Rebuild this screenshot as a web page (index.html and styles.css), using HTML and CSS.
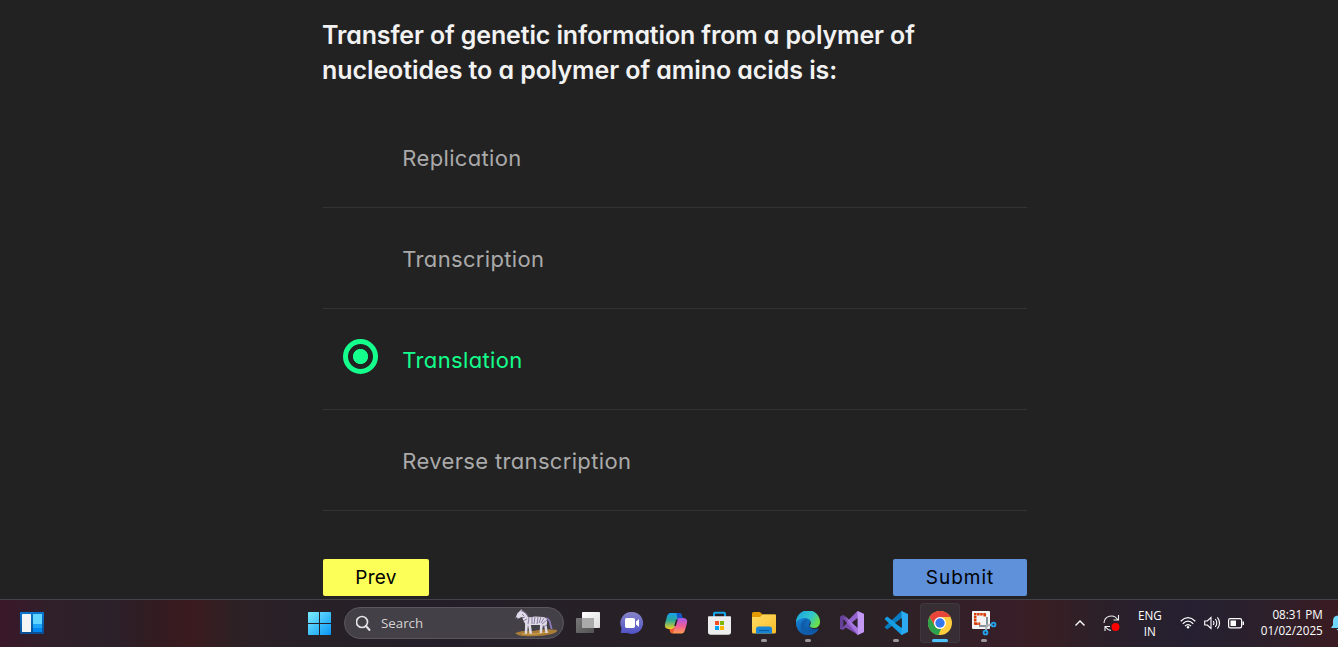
FILE: index.html
```html
<!DOCTYPE html>
<html lang="en">
<head>
<meta charset="utf-8">
<title>Quiz</title>
<link rel="stylesheet" href="styles.css">
</head>
<body>
<main class="quiz">
  <h1 class="question"><span class="q-first">Transfer of genetic information from a polymer of</span><br><span class="q-second">nucleotides to a polymer of amino acids is:</span></h1>
  <ul class="options">
    <li class="option"><span class="marker"></span><span class="label">Replication</span></li>
    <li class="option"><span class="marker"></span><span class="label">Transcription</span></li>
    <li class="option selected"><span class="marker"></span><span class="label">Translation</span></li>
    <li class="option"><span class="marker"></span><span class="label">Reverse transcription</span></li>
  </ul>
  <div class="actions">
    <button class="btn prev">Prev</button>
    <button class="btn submit">Submit</button>
  </div>
</main>
<footer class="taskbar">
  <div class="widgets">
    <svg width="24" height="22" viewBox="0 0 24 22"><defs><linearGradient id="wd" x2="0" y2="1"><stop stop-color="#0878d4"/><stop offset="1" stop-color="#0b4d91"/></linearGradient></defs><rect width="24" height="22" rx=".6" fill="url(#wd)"/><rect x="2" y="2" width="9" height="18" rx=".6" fill="#f4f4f4"/><rect x="13" y="2" width="9" height="10" fill="#60d5ff"/><rect x="13" y="12" width="9" height="4" fill="#1ca4fa"/><rect x="13" y="16" width="9" height="4" fill="#0086f0"/></svg>
  </div>
  <div class="apps">
    <div class="slot start"><svg width="24" height="24" viewBox="0 0 24 24"><defs><linearGradient id="wn" x2="1" y2="1"><stop stop-color="#7cecff"/><stop offset="1" stop-color="#0796f5"/></linearGradient></defs><path fill="url(#wn)" d="M0 1.800q0-.8.8-.8H11v11H0zM12 1h10.200q.8 0 .8.8V12H12zM0 13h11v11H.8q-.8 0-.8-.8zM12 13h11v10.200q0 .8-.8.8H12z"/></svg></div>
    <div class="search">
      <svg width="17" height="17" viewBox="0 0 17 17" fill="none" stroke="#e4e2e4" stroke-width="1.700"><circle cx="6" cy="7" r="5.500"/><path d="M10 11l3.500 4" stroke-width="2" stroke-linecap="round"/></svg>
      <span class="search-text">Search</span>
      <svg class="zebra" width="44" height="28" viewBox="0 0 44 28"><path d="M1 24q8-3 18-2 12-3 24-1 1 2-5 4-12 3-28 2-6 0-9-3z" fill="#a97c38"/><path d="M8 25q14 1 27-2" stroke="#d2a852" fill="none"/><path d="M1.500 9l1.800-4.500 2.700-2.700 1.200-1.500 2 2.300q3 1.800 5 6l7-1 8 .3q4 .5 4 4l-.5 4 1 8h-2.300l-1-6-1.500-2-1 8h-2.200l.3-8-9 .2 1 8.700h-2.500l-1.500-9-1 9h-2.200l.3-10q-2.600-4-2.800-7l-2.300 1-3 1.500z" fill="#dfdae8"/><path d="M32 9q4 1 4.500 7l1.200 4" stroke="#8c7bbb" stroke-width="1.800" fill="none"/><path d="M6.500 1.500q6 1 8 6M8 5l2 2M8 9l3-1M9 12l4-2M15 9l-1 6M18 8v7M21 8l-1 7M24 8l-1 7M27 8l-2 6M30 9l-3 5M33 11l-5 4M29 18l4-2" stroke="#7d729a" stroke-width=".9" fill="none"/><path d="M1.500 9l1.500-1 1 2-2 .6z" fill="#49405a"/></svg>
    </div>
    <div class="slot"><svg width="24" height="24" viewBox="0 0 24 24"><defs><linearGradient id="tv" x2="1" y2="1"><stop stop-color="#fff"/><stop offset="1" stop-color="#dcdcdc"/></linearGradient><linearGradient id="tk" x2="1" y2="1"><stop stop-color="#777"/><stop offset="1" stop-color="#535353"/></linearGradient></defs><rect x="0" y="7" width="18" height="15" rx=".8" fill="url(#tk)"/><rect x="6" y="1" width="18" height="16" rx=".8" fill="url(#tv)"/><path d="M6 7h12v10H6z" fill="#aaa"/></svg></div>
    <div class="slot"><svg width="24" height="24" viewBox="0 0 24 24"><defs><linearGradient id="ch" x2="0" y2="1"><stop stop-color="#8784c7"/><stop offset="1" stop-color="#5052c8"/></linearGradient></defs><path d="M12 1a11 11 0 1 1-4.500 21H.8l.8-5A11 11 0 0 1 12 1z" fill="url(#ch)"/><rect x="5" y="7" width="10" height="10" rx="1.700" fill="#fff"/><path d="M16 10.500L19 8v8l-3-2.500z" fill="#fff"/></svg></div>
    <div class="slot"><svg width="24" height="24" viewBox="0 0 24 24"><defs><linearGradient id="ca" x2="0" y2="1"><stop stop-color="#1aa1ee"/><stop offset=".45" stop-color="#28a99b"/><stop offset="1" stop-color="#f2cf1e"/></linearGradient><linearGradient id="cb" x2="0" y2="1"><stop stop-color="#a05be9"/><stop offset=".5" stop-color="#ef5c9c"/><stop offset="1" stop-color="#ff9c4b"/></linearGradient></defs><path d="M6.500 2H15q2 0 2.700 2l.8 3h-2.500q-2 0-2.600 2l-2.200 6.500Q10.400 18 8 18H4.500Q0 17.500 1 13l2-7.500Q4 2 6.500 2z" fill="url(#ca)"/><path d="M12.500 2H15q2 0 2.700 2l.8 3h-2.500q-2 0-2.600 2z" fill="#1756c8"/><path d="M17.500 22.500H9q-2 0-2.700-2L5.500 18H8q2 0 2.600-2l2.200-7q.7-2 2.900-2h4q4.300.5 3.300 5l-2 7q-1 3.500-3.500 3.500z" fill="url(#cb)"/><path d="M5.500 18H8q2 0 2.600-2l-1.200 5q-.4 1.500-1.700 1.300-1.200-.3-1.700-1.800z" fill="#f25d31"/><path d="M13 8.500l-2 6.500" stroke="#2a2229" stroke-width="1.600"/></svg></div>
    <div class="slot"><svg width="24" height="24" viewBox="0 0 24 24"><path d="M6 6V2.800q0-1 1-1h9q1 0 1 1V6" fill="none" stroke="#16a8ed" stroke-width="2"/><path d="M0 6q0-.8.8-.8h21.400q.8 0 .8.8v15q0 2.700-2.700 2.700H2.700Q0 23.700 0 21z" fill="#eee"/><path d="M7 10h4v4H7z" fill="#f14f21"/><path d="M12 10h4v4h-4z" fill="#7eb900"/><path d="M7 15h4v4H7z" fill="#00a3ee"/><path d="M12 15h4v4h-4z" fill="#feb800"/></svg></div>
    <div class="slot running"><svg width="24" height="24" viewBox="0 0 24 24"><defs><linearGradient id="fo" x2="1" y2="1"><stop stop-color="#ffdc66"/><stop offset="1" stop-color="#f9bd29"/></linearGradient></defs><path d="M0 2.500Q0 1 1.500 1H8l2.500 2.500H23q1 0 1 1V10H0z" fill="#e29b00"/><path d="M0 6h8l2.500-2.500H23q1 0 1 1V21q0 1.500-1.500 1.500h-21Q0 22.500 0 21z" fill="url(#fo)"/><path d="M4 22.500V18q0-2.500 2.500-2.500h11q2.500 0 2.500 2.500v4.500z" fill="#1685d5"/><path d="M7 19.500h10" stroke="#0b5b9f" stroke-width="1.200"/></svg></div>
    <div class="slot running"><svg width="24" height="24" viewBox="0 0 24 24"><defs><linearGradient id="ea" x2="1" y2=".5"><stop stop-color="#199fe5"/><stop offset=".65" stop-color="#32c6c9"/><stop offset="1" stop-color="#68df4d"/></linearGradient><linearGradient id="eb" x2="1" y2="1"><stop stop-color="#1787dc"/><stop offset="1" stop-color="#083f8d"/></linearGradient></defs><path d="M0 12Q1 5 9 6q6 1 5 6-2 3 1 5 3 1.500 7 .5.8 0 .5.800A12 12 0 0 1 0 12z" fill="url(#eb)"/><path d="M0 11.500A12 12 0 0 1 24 11c0 4-3 6-6 6-3.500 0-5-1.600-4-3 2-2.200 0-7-5-7Q3 7 0 11.500z" fill="url(#ea)"/><path d="M12 9.500Q8.500 11 8.500 14q0 5 5.500 6 4 .8 8.500-2-4 6-10.500 6Q8 24 5 18q-1.500-6 4-9.500 2-.5 3 1z" fill="#115ca8"/></svg></div>
    <div class="slot"><svg width="24" height="24" viewBox="0 0 24 24"><path d="M0 6l3-2 3 3 12 16-3-1L5.500 16.500 3 19l-3-1.500z" fill="#7b4db0"/><path d="M0 17.500L17.500 0 24 3v18l-6.500 3L3.500 8v8L0 18z" fill="#9563cd"/><path d="M17.500 0L24 3v18l-6.500 3z" fill="#c398f5"/><path d="M17.500 7v10l-6-5z" fill="#2c2229"/><path d="M0 6l3.500-2v14L0 17z" fill="#65409b"/><path d="M3.300 8v8L7 12z" fill="#2c2229"/><path d="M4 4l13.500 19.500V17L5 5z" fill="#a676df"/></svg></div>
    <div class="slot running"><svg width="24" height="24" viewBox="0 0 24 24"><path d="M.5 16L17.500 0 19 .6v6.200L3 18.500z" fill="#087cc1"/><path d="M.5 8L3 5.600l16 11.700V23l-1.500 1z" fill="#159ce2"/><path d="M17.500 0L24 3v18l-6.500 3q-1 0 0-1.500V2q0-1 0-2z" fill="#2baaf1"/><path d="M17.800 7v10L11 12z" fill="#292329"/></svg></div>
    <div class="slot running active"><svg width="24" height="24" viewBox="0 0 24 24"><circle cx="12" cy="12" r="12" fill="#ffcd3d"/><path d="M1.600 6A12 12 0 0 1 22.400 6H12l-5.200 9z" fill="#e9453b"/><path d="M1.600 6l5.200 9q2 3.500 6.200 3L10.500 24A12 12 0 0 1 1.600 6z" fill="#2ca24d"/><circle cx="12" cy="12" r="6" fill="#fff"/><circle cx="12" cy="12" r="4.700" fill="#3478ed"/></svg></div>
    <div class="slot running"><svg width="24" height="24" viewBox="0 0 24 24" overflow="visible"><rect width="18" height="18" rx="1" fill="#f2f3f4"/><path d="M2 3.200h12M3.200 5v9M3.200 12.800h5M12.800 3v3" fill="none" stroke="#d73b06" stroke-width="2.500" stroke-dasharray="2.500 .6"/><path d="M7 15h8V6" fill="none" stroke="#889098" stroke-width="2"/><path d="M14 14.500l5-.5M14.500 15l-.5 4" stroke="#abb1b6" stroke-width="2"/><circle cx="21.500" cy="13.500" r="1.900" fill="none" stroke="#23a4ed" stroke-width="1.900"/><circle cx="13.500" cy="21.500" r="1.900" fill="none" stroke="#23a4ed" stroke-width="1.900"/></svg></div>
  </div>
  <div class="tray">
    <svg class="chevron" width="12" height="8" viewBox="0 0 12 8"><path d="M1.500 6.500L6 2l4.500 4.500" fill="none" stroke="#fff" stroke-width="1.400"/></svg>
    <svg class="sync" width="18" height="18" viewBox="0 0 18 18" fill="none" stroke="#eee" stroke-width="1.100"><path d="M1 9a7.300 7.300 0 0 1 13.500-3.500M15.500 1v5h-5M8 16.500q-3.500-.5-5.500-3.500M2 17v-4.500h5"/><circle cx="12.500" cy="13" r="4" fill="#f00" stroke="none"/></svg>
    <div class="lang">ENG<br>IN</div>
    <svg class="wifi" width="16" height="14" viewBox="0 0 16 14" fill="none" stroke="#fff" stroke-width="1.200"><path d="M.7 5.200q7.300-7 14.600 0M2.800 7.700q5.200-5 10.400 0M5 10.200q3-3 6 0"/><circle cx="8" cy="11.300" r="1.200" fill="#fff" stroke="none"/></svg>
    <svg class="volume" width="17" height="14" viewBox="0 0 17 14" fill="none" stroke="#fff" stroke-width="1.100"><path d="M.7 5h2.600L7 1.500v11L3.300 9H.7zM9.200 5q1.500 2 0 4M11.300 3q3 4 0 8M13.400 1.300q4.300 5.700 0 11.400"/></svg>
    <svg class="battery" width="17" height="11" viewBox="0 0 17 11"><rect x=".6" y=".6" width="13" height="9.200" rx="1.600" fill="none" stroke="#fff" stroke-width="1.200"/><path d="M2.500 2.500H8v5.500H2.500zM14.500 3.500H16v3.500h-1.500z" fill="#fff"/></svg>
    <div class="clock">08:31 PM<br>01/02/2025</div>
    <svg class="bell" width="16" height="17" viewBox="0 0 16 17"><path d="M0 13l2-3V6q0-5.500 6-5.500T14 6v4l2 3zM5.500 14h5q-2.500 3.500-5 0z" fill="#70d9fb"/></svg>
  </div>
</footer>
</body>
</html>
```
FILE: styles.css
```css
* { box-sizing: border-box; }
body { margin: 0; width: 1338px; height: 647px; overflow: hidden; display: flex; flex-direction: column; background: #222; font-family: Inter, "Noto Sans", sans-serif; font-feature-settings: "cv11"; }
.quiz { width: 704px; height: 599px; margin-left: 323px; flex: none; }
.question { margin: 0 0 0 -1px; padding-top: 18px; height: 107px; font-size: 25px; line-height: 35px; font-weight: 600; color: #f2f2f2; white-space: nowrap; }
.q-first { letter-spacing: -.14px; }
.q-second { letter-spacing: -.08px; }
.options { margin: 0; padding: 0; list-style: none; }
.option { display: flex; height: 101px; padding-left: 20px; border-bottom: 1px solid #333; align-items: center; font-size: 22px; color: #aaa; }
.marker { width: 35px; height: 35px; margin: -6px 25px 0 0; flex: none; border-radius: 50%; }
.label { padding-top: 1px; margin-left: -.7px; letter-spacing: .34px; }
.selected { color: #14ff8c; }
.selected .marker { border: 5px solid #14ff8c; background: radial-gradient(circle, #14ff8c 7.200px, transparent 7.900px); }
.actions { display: flex; justify-content: space-between; padding-top: 48px; }
.btn { height: 37px; padding: 0; border: 0; border-radius: 2px; font: 400 19px/37px Inter, sans-serif; font-feature-settings: "cv11"; color: #000; }
.prev { width: 106px; background: #fbff57; letter-spacing: .3px; }
.submit { width: 134px; background: #5f90da; letter-spacing: 1px; }
.taskbar { height: 48px; flex: none; border-top: 1px solid #48434a; display: flex; background: linear-gradient(90deg, #3a1729 0, #30202a 50px, #2b2029 110px, #341b20 165px, #3b1a1e 190px, #2d2024 235px, #282127 290px, #241e29 450px, #272026 620px, #2b2226 870px, #381e28 1010px, #391f23 1040px, #2a202a 1110px, #252031 1190px, #2b202b 1260px, #3b1b22 1338px); font-family: "Open Sans", "Noto Sans", sans-serif; color: #fff; font-feature-settings: normal; }
.taskbar svg { display: block; flex: none; }
.widgets { width: 297px; padding: 12px 0 0 20px; }
.apps { display: flex; width: 770px; align-items: flex-start; }
.slot { width: 44px; height: 47px; flex: none; display: flex; flex-direction: column; align-items: center; padding-top: 11px; }
.start { padding-left: 2px; }
.search { width: 220px; height: 32px; margin: 7px 2px 0 3px; flex: none; display: flex; align-items: center; padding: 0 5px 0 11px; border: 1px solid #5b565e; border-radius: 16px; background: #444047; }
.search-text { margin-left: 8px; font-size: 13.300px; line-height: 20px; color: #d4d2d5; }
.zebra { margin-left: auto; }
.running::after { content: ""; width: 6px; height: 3px; flex: none; margin-top: 4px; border-radius: 2px; background: #9b979c; }
.active { width: 40px; height: 40px; margin: 3px 2px 0; padding-top: 8px; border-radius: 4px; background: #362e33; box-shadow: inset 0 0 0 1px #403840; }
.active::after { width: 16px; background: #4cc2ff; }
.tray { display: flex; align-items: center; width: 271px; overflow: hidden; font-size: 11.700px; line-height: 16px; }
.chevron { margin: -2px 0 0 7px; }
.sync { margin-left: 17px; margin-top: -1px; }
.lang { width: 28px; margin: -2px 0 0 17px; text-align: center; }
.wifi { margin: -2px 0 0 18px; }
.volume { margin: -1px 0 0 8px; }
.battery { margin: -1px 0 0 7px; }
.clock { width: 70px; flex: none; margin: -3px 0 0 8px; text-align: right; }
.bell { margin-left: 8px; }
```
